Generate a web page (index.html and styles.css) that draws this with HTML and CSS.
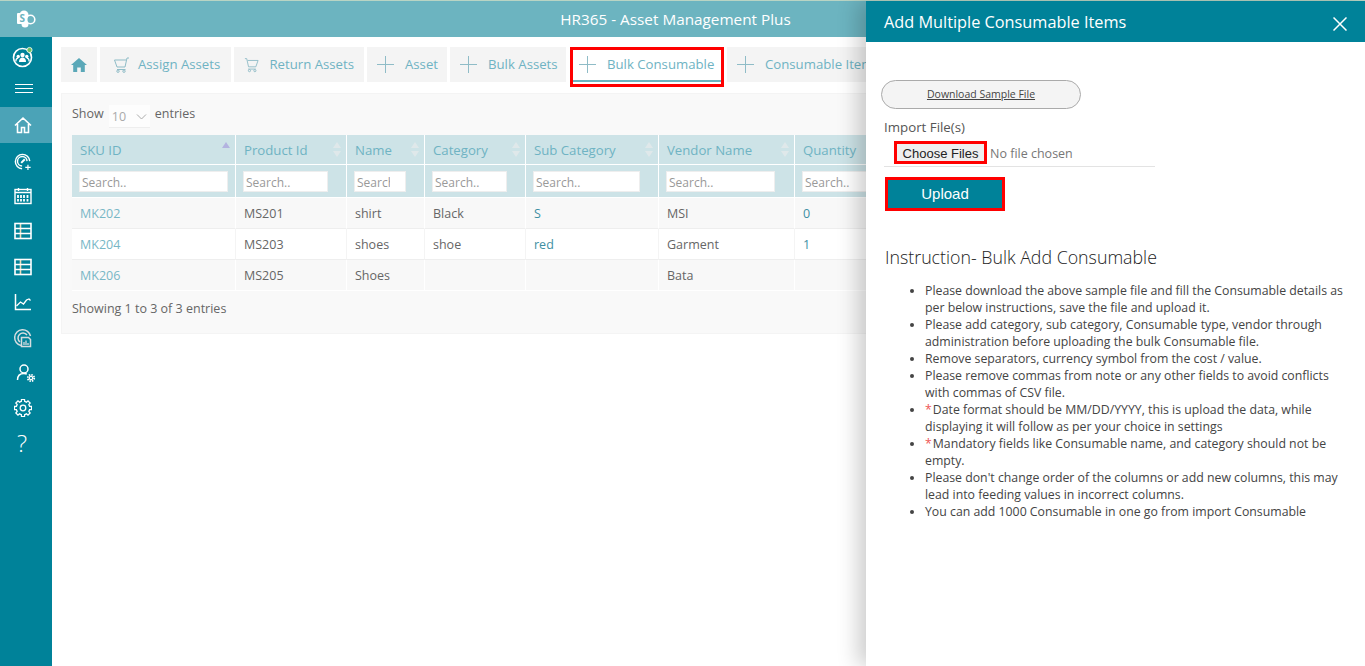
FILE: index.html
```html
<!DOCTYPE html>
<html>
<head>
<meta charset="UTF-8">
<title>HR365 - Asset Management Plus</title>
<link rel="stylesheet" href="styles.css">
</head>
<body>
<div class="app">
  <header class="topbar">
    <div class="logo-cell">
      <svg width="20" height="18" viewBox="0 0 20 18"><circle cx="8" cy="5" r="4.5" fill="#fff"/><circle cx="14.5" cy="9.500" r="4.300" fill="none" stroke="#fff" stroke-width="1.6"/><circle cx="9" cy="14" r="3.500" fill="#fff"/><rect x="1" y="3" width="10.500" height="11" rx="1" fill="#fff"/><text x="3.500" y="12.200" class="logo-s">S</text></svg>
    </div>
    <div class="app-title">HR365 - Asset Management Plus</div>
  </header>
  <div class="main">
    <nav class="sidebar">
      <div class="side-top">
        <svg width="22" height="22" viewBox="0 0 22 22" fill="none"><circle cx="10.5" cy="11.5" r="9" stroke="#fff" stroke-width="1.6"/><circle cx="10.5" cy="9" r="2.2" fill="#fff"/><circle cx="6.2" cy="10.500" r="1.7" fill="#fff"/><circle cx="14.8" cy="10.500" r="1.7" fill="#fff"/><path d="M7 16c0-3 1.500-4.500 3.500-4.500S14 13 14 16z" fill="#fff"/><path d="M3.800 15.500c0-2 1-3.400 2.400-3.400M17.200 15.500c0-2-1-3.400-2.400-3.400" stroke="#fff" stroke-width="1.2"/><circle cx="17.500" cy="4" r="2.600" fill="#6fbf5f" stroke="#fff" stroke-width=".8"/></svg>
        <div class="burger"><span></span><span></span><span></span></div>
      </div>
      <a class="side-item active"><svg width="18" height="18" viewBox="0 0 18 18" fill="none" stroke="#fff" stroke-width="1.6"><path d="M1 9.500 9 2l8 7.500M3.500 8v8.500h4v-5h3v5h4V8"/></svg></a>
      <a class="side-item item-gauge"><svg width="18" height="18" viewBox="0 0 20 20" fill="none" stroke="#fff" stroke-width="1.6"><path d="M9 17.500A8 8 0 1 1 17.500 9"/><path d="M9 14.500A5.300 5.300 0 1 1 14.500 9"/><path d="m8 11 4-4" stroke-width="2.200"/><path d="M15.500 13v6M12.500 16h6" stroke-width="1.300"/></svg></a>
      <a class="side-item"><svg width="18" height="18" viewBox="0 0 18 18" fill="none" stroke="#fff" stroke-width="1.4"><rect x="1" y="2.500" width="16" height="14"/><path d="M1 5.500h16M4.500 1v3M13.500 1v3"/><path d="M4 8v6.500M7 8v6.500M10 8v6.500M13.500 8v6.500" stroke-width="1.800" stroke-dasharray="3 1"/></svg></a>
      <a class="side-item"><svg width="18" height="18" viewBox="0 0 18 18" fill="none" stroke="#fff" stroke-width="1.6"><path d="M6.500 1.500v15" stroke="#e8d9b8"/><rect x="1" y="1.500" width="16" height="15"/><path d="M1 6.500h16M1 11.500h16"/></svg></a>
      <a class="side-item"><svg width="18" height="18" viewBox="0 0 18 18" fill="none" stroke="#fff" stroke-width="1.6"><path d="M6.500 1.500v15" stroke="#e8d9b8"/><rect x="1" y="1.500" width="16" height="15"/><path d="M1 6.500h16M1 11.500h16"/></svg></a>
      <a class="side-item"><svg width="18" height="18" viewBox="0 0 18 18" fill="none" stroke="#fff" stroke-width="1.500"><path d="M1.500 1v15.500H17"/><path d="m2.500 13 4-4 3 2 3-4 2.500-1 1.500 1.500" stroke-width="1.300"/></svg></a>
      <a class="side-item"><svg width="20" height="20" viewBox="0 0 20 20" fill="none" stroke="#d5dde0" stroke-width="1.500"><path d="M8 17.500A8 8 0 1 1 17.500 8"/><path d="M7 14A5 5 0 1 1 14 7"/><path d="M8.500 9.500h7l2 2v7h-9z" fill="#008299"/><path d="M11 17v-3M13 17v-4.500M15 17v-2" stroke-width="1.300"/></svg></a>
      <a class="side-item item-user"><svg width="20" height="20" viewBox="0 0 20 20" fill="none" stroke="#fff" stroke-width="1.500"><circle cx="8" cy="6" r="4"/><path d="M1.500 17c0-4 2.500-6.500 6.500-6.500 1 0 2 .2 2.800.5"/><circle cx="15" cy="15" r="1.700" stroke-width="1.200"/><circle cx="15" cy="15" r="3.200" stroke-width="1.800" stroke-dasharray="1.500 1"/></svg></a>
      <a class="side-item item-gear"><svg width="18" height="18" viewBox="0 0 18 18" fill="none" stroke="#fff" stroke-width="1.300"><circle cx="9" cy="9" r="2.800"/><path d="M7.350 2.400 7.490.43h3.020l.14 1.970 1.850.77 1.490-1.300 2.140 2.140-1.300 1.490.77 1.850 1.970.14v3.020l-1.970.14-.77 1.850 1.300 1.490-2.140 2.140-1.490-1.300-1.850.77-.14 1.970H7.490l-.14-1.970-1.850-.77-1.490 1.300-2.140-2.140 1.300-1.490-.77-1.850-1.970-.14V7.490l1.970-.14.77-1.850-1.300-1.490 2.140-2.140 1.490 1.300z"/></svg></a>
      <a class="side-item help">?</a>
    </nav>
    <main class="content">
      <div class="tabs">
        <a class="tab tab-home"><svg width="16" height="14" viewBox="0 0 16 14"><path d="M8 0 0 7h2.200v7h4V9.500h3.600V14h4V7H16z" fill="#5ba8b8"/></svg></a>
        <a class="tab tab-assign"><svg class="tab-icon" width="17" height="16" viewBox="0 0 17 16" fill="none" stroke="#8fbcc7"><path d="M16 1h-2l-2 9H4L1.500 3H13"/><path d="M4 12.500h8.500"/><circle cx="5" cy="14.200" r="1.200"/><circle cx="11" cy="14.200" r="1.200"/></svg>Assign Assets</a>
        <a class="tab tab-return"><svg class="tab-icon" width="17" height="16" viewBox="0 0 17 16" fill="none" stroke="#8fbcc7"><path d="M1 1h2l2 9h8l2.500-7H4"/><path d="M4.500 12.500H13"/><circle cx="6" cy="14.200" r="1.200"/><circle cx="12" cy="14.200" r="1.200"/></svg>Return Assets</a>
        <a class="tab tab-asset"><span class="plus"></span>Asset</a>
        <a class="tab tab-bulk"><span class="plus"></span>Bulk Assets</a>
        <a class="tab tab-active"><span class="plus"></span>Bulk Consumable</a>
        <a class="tab"><span class="plus"></span>Consumable Items</a>
      </div>
      <section class="card">
        <div class="length-row">Show <span class="length-select">10<svg width="11" height="6" viewBox="0 0 11 6" fill="none" stroke="#aaa"><path d="m1 .5 4.500 4.500L10 .5"/></svg></span> entries</div>
        <table class="grid">
          <colgroup>
            <col class="c1"><col class="c2"><col class="c3"><col class="c4"><col class="c5"><col class="c6"><col class="c7">
          </colgroup>
          <thead>
            <tr class="head-row">
              <th>SKU ID<span class="sort only-up"></span></th>
              <th>Product Id<span class="sort"></span></th>
              <th>Name<span class="sort"></span></th>
              <th>Category<span class="sort"></span></th>
              <th>Sub Category<span class="sort"></span></th>
              <th>Vendor Name<span class="sort"></span></th>
              <th>Quantity<span class="sort"></span></th>
            </tr>
            <tr class="search-row">
              <th><input class="in1" placeholder="Search.."></th>
              <th><input class="in2" placeholder="Search.."></th>
              <th><input class="in3" placeholder="Search.."></th>
              <th><input class="in4" placeholder="Search.."></th>
              <th><input class="in5" placeholder="Search.."></th>
              <th><input class="in6" placeholder="Search.."></th>
              <th><input class="in7" placeholder="Search.."></th>
            </tr>
          </thead>
          <tbody>
            <tr class="odd"><td class="link">MK202</td><td>MS201</td><td>shirt</td><td>Black</td><td class="val">S</td><td>MSI</td><td class="val">0</td></tr>
            <tr><td class="link">MK204</td><td>MS203</td><td>shoes</td><td>shoe</td><td class="val">red</td><td>Garment</td><td class="val">1</td></tr>
            <tr class="odd last"><td class="link">MK206</td><td>MS205</td><td>Shoes</td><td></td><td></td><td>Bata</td><td></td></tr>
          </tbody>
        </table>
        <div class="table-info">Showing 1 to 3 of 3 entries</div>
      </section>
    </main>
  </div>
  <aside class="panel">
    <div class="panel-head">
      <h2>Add Multiple Consumable Items</h2>
      <svg class="panel-close" width="14" height="14" viewBox="0 0 14 14" stroke="#fff" stroke-width="1.500"><path d="m.5.500 13 13M13.500.500l-13 13"/></svg>
    </div>
    <div class="panel-body">
      <a class="sample-btn">Download Sample File</a>
      <label class="import-label">Import File(s)</label>
      <div class="file-row"><span class="choose-btn">Choose Files</span><span class="no-file">No file chosen</span></div>
      <button class="upload-btn">Upload</button>
      <h3>Instruction- Bulk Add Consumable</h3>
      <ul class="steps">
        <li>Please download the above sample file and fill the Consumable details as per below instructions, save the file and upload it.</li>
        <li>Please add category, sub category, Consumable type, vendor through administration before uploading the bulk Consumable file.</li>
        <li>Remove separators, currency symbol from the cost / value.</li>
        <li>Please remove commas from note or any other fields to avoid conflicts with commas of CSV file.</li>
        <li><span class="req">*</span>Date format should be MM/DD/YYYY, this is upload the data, while displaying it will follow as per your choice in settings</li>
        <li><span class="req">*</span>Mandatory fields like Consumable name, and category should not be empty.</li>
        <li>Please don't change order of the columns or add new columns, this may lead into feeding values in incorrect columns.</li>
        <li>You can add 1000 Consumable in one go from import Consumable</li>
      </ul>
    </div>
  </aside>
</div>
</body>
</html>
```

FILE: styles.css
```css
*{
    box-sizing: border-box;
}
html,body{
    margin: 0;
    padding: 0;
    height: 100%;
    overflow: hidden;
}
body{
    font-family: "Open Sans", "Noto Sans", sans-serif;
    font-size: 12.5px;
    color: #666;
    background-color: #fff;
}
.app{
    position: relative;
    height: 666px;
    width: 1365px;
    overflow: hidden;
}

/* top bar */
.topbar{
    display: flex;
    height: 37px;
    background-color: #6cb4c0;
    border-top: 1px solid #b9d4c4;
}
.logo-cell{
    width: 52px;
    display: flex;
    align-items: center;
    justify-content: center;
}
.logo-s{
    font-size: 10px;
    font-weight: bold;
    fill: #6cb4c0;
}
.app-title{
    flex: 1;
    padding-right: 66px;
    text-align: center;
    color: #fff;
    font-size: 15.3px;
    line-height: 36px;
}
.main{
    display: flex;
    height: 629px;
}

/* sidebar */
.sidebar{
    width: 52px;
    background-color: #008299;
    display: flex;
    flex-direction: column;
}
.side-top{
    height: 70px;
    display: flex;
    flex-direction: column;
    align-items: center;
    padding: 9px 6px 0 0;
}
.burger{
    margin-top: 16px;
    margin-left: 2px;
    width: 18px;
}
.burger span{
    display: block;
    height: 1px;
    background-color: #fff;
    margin-bottom: 3px;
}
.side-item{
    height: 35.5px;
    padding-right: 6px;
    display: flex;
    align-items: center;
    justify-content: center;
}
.side-item.active{
    background-color: #4ba3b7;
}
.item-gauge svg{
    margin-top: 3px;
}
.item-user svg{
    margin-left: 5px;
}
.item-gear svg{
    margin-top: -2px;
}
.help{
    color: #fff;
    font-size: 24px;
    font-weight: 300;
    margin-left: -2px;
    padding-bottom: 4px;
}

/* tabs */
.content{
    flex: 1;
    padding: 10px 8px 0 9px;
    min-width: 0;
}
.tabs{
    display: flex;
    gap: 3px;
    height: 35px;
    white-space: nowrap;
}
.tab{
    display: flex;
    align-items: center;
    flex: none;
    background-color: #f4f4f4;
    color: #6fb3c3;
    padding: 0 10px 2px;
    font-size: 13.2px;
}
.tab-home{
    width: 36px;
    padding: 0;
    justify-content: center;
}
.tab-icon{
    margin-top: 2px;
    margin-right: 8px;
}
.tab-assign{
    width: 131px;
    padding-left: 13px;
}
.tab-return{
    width: 130px;
}
.tab-return .tab-icon{
    margin-right: 10px;
}
.tab-asset{
    width: 80px;
}
.tab-bulk{
    width: 116px;
}
.plus{
    position: relative;
    width: 17px;
    height: 17px;
    margin-top: 2px;
    margin-right: 11px;
    flex: none;
}
.plus:before,.plus:after{
    content: "";
    position: absolute;
    background-color: #8fbcc7;
}
.plus:before{
    left: 8px;
    top: 0;
    width: 1px;
    height: 17px;
}
.plus:after{
    left: 0;
    top: 8px;
    width: 17px;
    height: 1px;
}
.tab-active{
    position: relative;
    width: 150px;
    margin: 0 2px 0 3px;
    background-color: #fff;
    padding: 0 0 2px 7px;
}
.tab-active:before{
    content: "";
    position: absolute;
    left: 1px;
    right: 1px;
    top: 33px;
    height: 2px;
    background-color: #6cb4c0;
}
.tab-active:after{
    content: "";
    position: absolute;
    left: -2px;
    right: -2px;
    top: 0;
    bottom: -5px;
    border: 3px solid #f00;
    pointer-events: none;
}

/* table card */
.card{
    margin-top: 11px;
    background-color: #f9f9f9;
    border: 1px solid #f4f4f4;
    padding: 0 10px;
    height: 241px;
    width: 1296px;
}
.length-row{
    display: flex;
    align-items: center;
    height: 41px;
    padding-bottom: 2px;
    gap: 5px;
}
.length-select{
    display: flex;
    align-items: center;
    justify-content: space-between;
    width: 41px;
    height: 23px;
    margin-top: 5px;
    padding: 2px 3px 0 3px;
    background-color: #fdfdfd;
    border-bottom: 1px solid #eee;
    color: #aaa;
}
.grid{
    border-collapse: separate;
    border-spacing: 0;
    table-layout: fixed;
    width: 1070px;
}
.c1{width: 164px;}
.c2{width: 111px;}
.c3{width: 78px;}
.c4{width: 101px;}
.c5{width: 133px;}
.c6{width: 136px;}
.c7{width: 347px;}
.grid th{
    background-color: #cde3e7;
    font-weight: normal;
    text-align: left;
    border-right: 1px solid #fff;
}
.head-row th{
    position: relative;
    height: 30px;
    padding: 0 8px;
    color: #6fb3c3;
    font-size: 13.2px;
    border-bottom: 1px solid #fff;
}
.sort{
    position: absolute;
    right: 5px;
    top: 7px;
    width: 8px;
    height: 15px;
}
.sort:before,.sort:after{
    content: "";
    position: absolute;
    left: 0;
    border-left: 4px solid transparent;
    border-right: 4px solid transparent;
}
.sort:before{
    top: 0;
    border-bottom: 6px solid #dfe8ea;
}
.sort:after{
    bottom: 0;
    border-top: 6px solid #dfe8ea;
}
.sort.only-up:before{
    border-bottom-color: #b3b3e0;
}
.sort.only-up:after{
    display: none;
}
.search-row th{
    height: 33px;
    padding: 0 7px;
    border-bottom: 1px solid #fff;
}
.search-row input{
    display: block;
    height: 21px;
    margin-top: 1px;
    border: 1px solid #eee;
    background-color: #fff;
    padding: 1px 2px 0;
    font-family: inherit;
    font-size: 12px;
    outline: none;
}
.search-row input::placeholder{
    color: #999;
}
.in1{width: 149px;}
.in2{width: 85px;}
.search-row .in3{
    width: 52px;
    padding-right: 15px;
}
.in4{width: 75px;}
.in5{width: 107px;}
.in6{width: 109px;}
.in7{width: 109px;}
.grid td{
    height: 31px;
    padding: 0 8px;
    background-color: #fff;
    border-right: 1px solid #f4f4f4;
    border-bottom: 1px solid #eee;
    color: #666;
}
.grid tr.odd td{
    background-color: #f8f8f8;
    border-right: 1px solid #fff;
}
.grid tr.last td{
    border-bottom-color: #fff;
}
.grid td.link{
    color: #78b7c6;
}
.grid td.val{
    color: #3e8fa3;
}
.table-info{
    margin-top: 9px;
    line-height: 17px;
}

/* side panel */
.panel{
    position: absolute;
    top: 1px;
    right: 0;
    bottom: 0;
    width: 499px;
    background-color: #fff;
    box-shadow: -8px 0 20px rgba(0,0,0,0.2);
}
.panel-head{
    display: flex;
    align-items: center;
    justify-content: space-between;
    height: 41px;
    background-color: #008299;
    padding: 0 18px;
    color: #fff;
}
.panel-head h2{
    margin: 0;
    font-size: 16.3px;
    font-weight: 400;
    color: #fff;
}
.panel-close{
    margin-top: 5px;
}
.panel-body{
    padding: 38px 16px 0 15px;
}
.sample-btn{
    display: block;
    width: 200px;
    height: 29px;
    line-height: 27px;
    border: 1px solid #aaa;
    border-radius: 15px;
    background-color: #f4f4f4;
    text-align: center;
    color: #444;
    font-size: 10.5px;
    text-decoration: underline;
}
.import-label{
    display: block;
    margin: 10px 0 0 3px;
    color: #555;
    font-size: 13.3px;
    line-height: 17px;
}
.file-row{
    display: flex;
    align-items: flex-end;
    width: 271px;
    height: 31px;
    margin-left: 3px;
    padding: 0 0 2px 10px;
    border-bottom: 1px solid #e3e3e3;
}
.choose-btn{
    width: 93px;
    height: 23px;
    line-height: 19px;
    text-align: center;
    background-color: #efefef;
    border: 3px solid #f00;
    color: #222;
    font-family: "Liberation Sans", sans-serif;
    font-size: 13px;
}
.no-file{
    margin-left: 3px;
    color: #777;
    line-height: 21px;
}
.upload-btn{
    display: block;
    width: 120px;
    height: 34px;
    margin: 10px 0 0 4px;
    padding: 0 0 2px;
    background-color: #008299;
    border: 3px solid #f00;
    color: #fff;
    font-family: "Liberation Sans", sans-serif;
    font-size: 15px;
}
.panel-body h3{
    margin: 35px 0 0 4px;
    font-size: 17.8px;
    font-weight: 300;
    color: #222;
    line-height: 22px;
}
.steps{
    margin: 14px 0 0;
    padding-left: 44px;
    color: #444;
    font-size: 12.3px;
    line-height: 17px;
}
.req{
    display: inline-block;
    color: #e55;
    margin-right: 1px;
}
```
